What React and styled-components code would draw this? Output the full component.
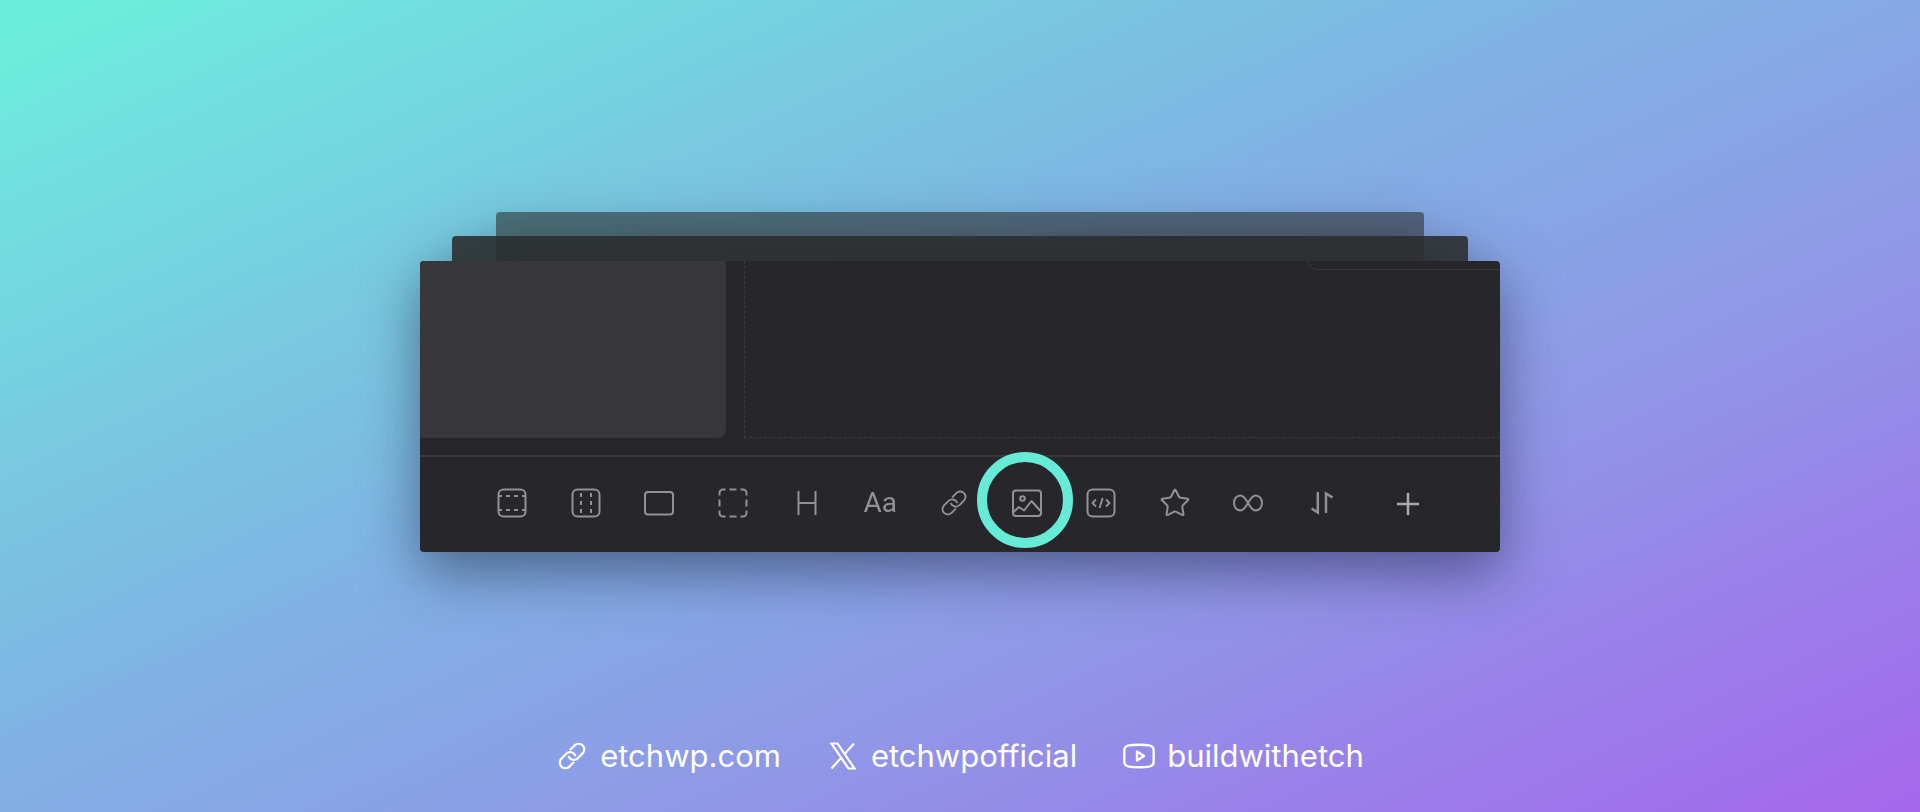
import React from "react";
import styled, { createGlobalStyle } from "styled-components";
import { Star } from "lucide-react";

const GlobalStyle = createGlobalStyle`
  *, *::before, *::after { box-sizing: border-box; }
  body { margin: 0; font-family: Inter, "Liberation Sans", sans-serif; }
`;

const Page = styled.div`
  display: flex;
  flex-direction: column;
  align-items: center;
  min-height: 100vh;
  padding: 212px 0 36px;
  background: linear-gradient(155deg, #6bf0dc 0%, #7fb5e3 42%, #8f98e7 66%, #a567ec 100%);
`;

const Stack = styled.main`
  display: grid;
  width: 56.25%;
  min-width: 720px;
  border-radius: 4px;
  filter: drop-shadow(0 20px 28px rgba(20, 22, 50, 0.5));
`;

const Layer = styled.div`
  grid-area: 1 / 1;
  margin: ${(p) => p.$top}px ${(p) => p.$inset} 0;
  border-radius: 4px;
  background: ${(p) => p.$tint};
`;

const Editor = styled.section`
  grid-area: 1 / 1;
  display: flex;
  flex-direction: column;
  margin-top: 49px;
  border-radius: 4px;
  background: #27262a;
`;

const Workspace = styled.div`
  display: flex;
  gap: 18px;
  height: 194px;
  padding-bottom: 17px;
`;

const SidePanel = styled.div`
  flex: 0 0 306px;
  border-radius: 4px 0 8px 0;
  background: #38373b;
`;

const Canvas = styled.div`
  display: flex;
  flex: 1;
  justify-content: flex-end;
  align-items: flex-start;
  border: 1px dashed #3a393d;
  border-width: 0 0 1px 1px;
`;

const CanvasTab = styled.div`
  width: 192px;
  height: 9px;
  border: 1px solid #3a393d;
  border-width: 0 0 1px 1px;
  border-radius: 0 0 0 9px;
`;

const Toolbar = styled.div`
  display: flex;
  align-items: center;
  gap: 54px;
  height: 97px;
  padding: 0 76px 4px;
  border-top: 2px solid #38373b;
`;

const ToolGroup = styled.div`
  display: flex;
  flex: 1;
  justify-content: space-between;
`;

const ToolButton = styled.button`
  position: relative;
  display: flex;
  align-items: center;
  justify-content: center;
  width: 32px;
  height: 32px;
  padding: 0;
  border: 0;
  background: none;
  color: ${(p) => (p.$bright ? "#a9a8ab" : "#929195")};
  cursor: pointer;
`;

const TypeLabel = styled.span`
  font: 400 28px/32px Roboto, Inter, sans-serif;
`;

const Highlight = styled.span`
  position: absolute;
  top: -35px;
  left: -34px;
  width: 96px;
  height: 96px;
  border: 10px solid #67ebd6;
  border-radius: 50%;
  pointer-events: none;
`;

const Links = styled.footer`
  display: flex;
  flex-wrap: wrap;
  justify-content: center;
  gap: 46px;
  margin-top: auto;
`;

const SocialLink = styled.a`
  display: flex;
  align-items: center;
  gap: 12px;
  color: #fff;
  font-size: 31px;
  line-height: 40px;
  text-decoration: none;
`;

function Glyph({ children, width = 2, size = 32 }) {
  return (
    <svg width={size} height={size} viewBox="0 0 32 32" fill="none" stroke="currentColor"
      strokeWidth={width} strokeLinecap="butt" strokeLinejoin="round" aria-hidden="true">
      {children}
    </svg>
  );
}

const ChainLink = ({ size, width }) => (
  <Glyph size={size} width={width}>
    <path d="M14.500 9.500l4.100-4.100A5.600 5.600 0 0 1 26.600 13.400L21.800 18.200A5.600 5.600 0 0 1 12.800 16.700" strokeLinecap="round" />
    <path d="M17.500 22.500l-4.100 4.100A5.600 5.600 0 0 1 5.400 18.600L10.200 13.800A5.600 5.600 0 0 1 19.200 15.300" strokeLinecap="round" />
  </Glyph>
);

const tools = [
  { name: "Section", icon: <Glyph><rect x="2.5" y="2.5" width="27" height="27" rx="5" /><path d="M3 9h3M10 9h4M18 9h4M26 9h3M3 23h3M10 23h4M18 23h4M26 23h3" /></Glyph> },
  { name: "Columns", icon: <Glyph><rect x="2.5" y="2.5" width="27" height="27" rx="5" /><path d="M11 6v4M11 14v4M11 22v4M21 6v4M21 14v4M21 22v4" /></Glyph> },
  { name: "Container", icon: <Glyph><rect x="2" y="5" width="28" height="22.5" rx="3" /></Glyph> },
  { name: "Block", icon: <Glyph><path d="M2.5 8.5V6a3.5 3.5 0 0 1 3.500-3.500H8.500M12.500 2.500h7M23.500 2.500H26A3.500 3.500 0 0 1 29.500 6v2.500M29.500 12.500v7M29.500 23.500V26a3.500 3.500 0 0 1-3.500 3.500h-2.500M19.500 29.500h-7M8.500 29.500H6A3.500 3.500 0 0 1 2.500 26v-2.500M2.500 19.500v-7" /></Glyph> },
  { name: "Heading", icon: <Glyph><path d="M7.500 4v24M24.500 4v24M7.500 16h17" /></Glyph> },
  { name: "Text", icon: <TypeLabel>Aa</TypeLabel> },
  { name: "Link", icon: <ChainLink size={30} width={2} /> },
  { name: "Image", highlighted: true, icon: <Glyph><rect x="2" y="3.500" width="28" height="25.500" rx="3" /><circle cx="11.500" cy="11.500" r="2.300" /><path d="M2.500 25l5.500-5 5 3.500 7.500-9.500 9 10" /></Glyph> },
  { name: "Code", icon: <Glyph><rect x="2.500" y="2.500" width="27" height="27" rx="5" /><path d="M11 12.500L7.500 16l3.500 3.500M21 12.500l3.500 3.500-3.500 3.500M17.700 11l-3.200 10" /></Glyph> },
  { name: "Icon", icon: <Star size={32} strokeWidth={1.5} /> },
  { name: "Loop", icon: <Glyph><path d="M16 16c-2.200-4-4.600-7.500-7.600-7.500C4.600 8.500 2 11.800 2 16s2.600 7.500 6.400 7.500c3 0 5.400-3.500 7.600-7.500s4.600-7.500 7.600-7.500c3.800 0 6.400 3.300 6.400 7.500s-2.600 7.500-6.400 7.500c-3 0-5.400-3.500-7.600-7.500z" /></Glyph> },
  { name: "Swap", icon: <Glyph width={2.5}><path d="M11.800 5v20.500L5.500 21.500M20 26V6.500l6.500 4" strokeLinejoin="miter" /></Glyph> },
];

const XLogo = () => (
  <Glyph width={2.2}><path d="M4.500 3.500h6l17 25h-6zM27 3.500L18 13.500M4.500 28.500l9.500-10.500" strokeLinejoin="miter" /></Glyph>
);

const VideoLogo = () => (
  <Glyph width={2.4}>
    <path d="M16 4.800c4 0 7.500.2 10 .6 3 .5 4.700 2 4.700 5v11.200c0 3-1.700 4.500-4.700 5-2.500.4-6 .6-10 .6s-7.500-.2-10-.6c-3-.5-4.700-2-4.700-5V10.400c0-3 1.700-4.500 4.700-5 2.500-.4 6-.6 10-.6z" />
    <path d="M14 11.500v9l7-4.500z" />
  </Glyph>
);

const links = [
  { text: "etchwp.com", href: "https://etchwp.com", icon: <ChainLink size={32} width={2.2} /> },
  { text: "etchwpofficial", href: "https://x.com/etchwpofficial", icon: <XLogo /> },
  { text: "buildwithetch", href: "https://youtube.com/@buildwithetch", icon: <VideoLogo /> },
];

export default function App() {
  return (
    <Page>
      <GlobalStyle />
      <Stack>
        <Layer $top={0} $inset="7%" $tint="rgba(42, 44, 43, 0.56)" />
        <Layer $top={24} $inset="3%" $tint="rgba(42, 44, 43, 0.87)" />
        <Editor>
          <Workspace>
            <SidePanel />
            <Canvas><CanvasTab /></Canvas>
          </Workspace>
          <Toolbar role="toolbar" aria-label="Elements">
            <ToolGroup>
              {tools.map((tool) => (
                <ToolButton key={tool.name} type="button" aria-label={tool.name}>
                  {tool.icon}
                  {tool.highlighted && <Highlight />}
                </ToolButton>
              ))}
            </ToolGroup>
            <ToolButton type="button" aria-label="Add" $bright>
              <Glyph width={2.6}><path d="M16 6v22M5 17h22" /></Glyph>
            </ToolButton>
          </Toolbar>
        </Editor>
      </Stack>
      <Links>
        {links.map((link) => (
          <SocialLink key={link.text} href={link.href}>
            {link.icon}
            {link.text}
          </SocialLink>
        ))}
      </Links>
    </Page>
  );
}
